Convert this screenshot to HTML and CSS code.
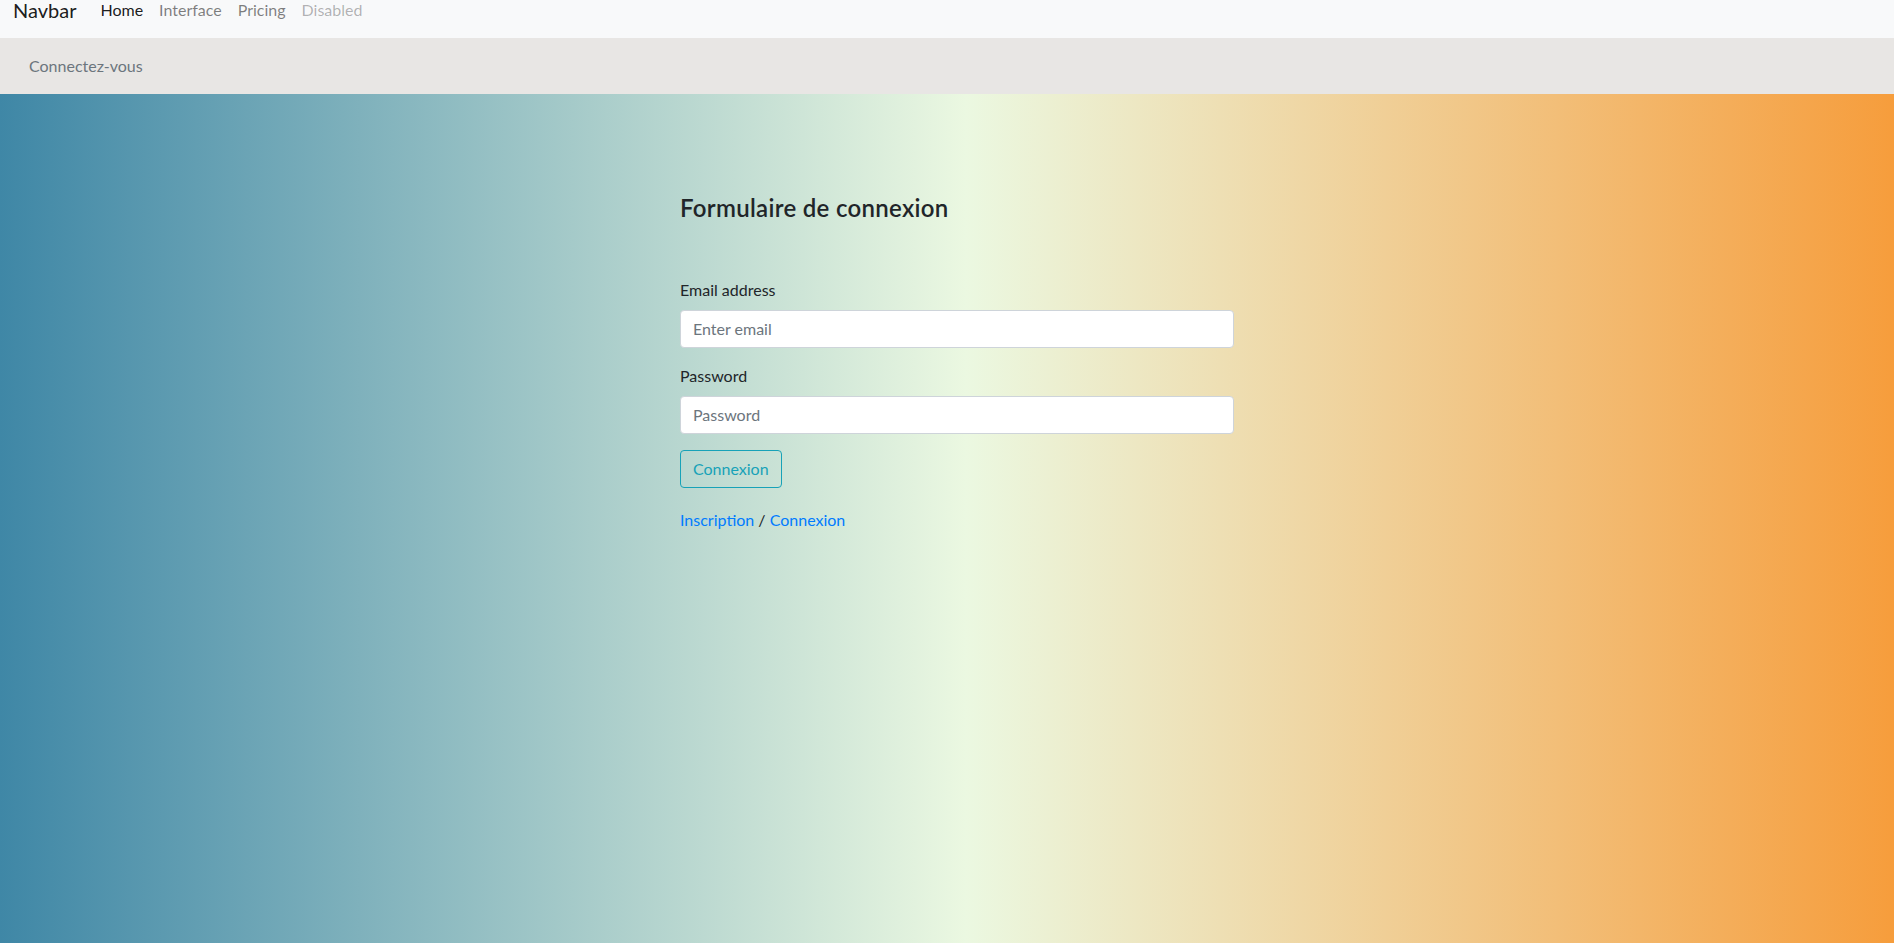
FILE: index.html
```html
<!DOCTYPE html>
<html lang="fr">
<head>
<meta charset="utf-8">
<title>Connexion</title>
<link rel="stylesheet" href="styles.css">
</head>
<body>
<nav class="navbar">
  <a class="brand" href="#">Navbar</a>
  <ul class="nav">
    <li><a class="nav-link active" href="#">Home</a></li>
    <li><a class="nav-link" href="#">Interface</a></li>
    <li><a class="nav-link" href="#">Pricing</a></li>
    <li><a class="nav-link disabled" href="#">Disabled</a></li>
  </ul>
</nav>
<div class="crumb"><span class="crumb-item">Connectez-vous</span></div>
<main class="hero">
  <div class="form-wrap">
    <h4 class="title">Formulaire de connexion</h4>
    <form class="login">
      <div class="form-group">
        <label class="label" for="email">Email address</label>
        <input class="input" id="email" type="email" placeholder="Enter email">
      </div>
      <div class="form-group">
        <label class="label" for="pwd">Password</label>
        <input class="input" id="pwd" type="password" placeholder="Password">
      </div>
      <button class="btn" type="button">Connexion</button>
    </form>
    <p class="links"><a href="#">Inscription</a> / <a href="#">Connexion</a></p>
  </div>
</main>
</body>
</html>
```
FILE: styles.css
```css
* { box-sizing: border-box; }
html, body { margin: 0; padding: 0; }
body {
  font-family: "Segoe UI", Lato, "Noto Sans", sans-serif;
  font-size: 16px;
  line-height: 24px;
  color: #212529;
  background: #fff;
}
a { text-decoration: none; }

.navbar {
  height: 38px;
  padding: 0 12px 0 13px;
  display: flex;
  align-items: flex-start;
  background: #f8f9fa;
}
.brand {
  font-size: 20px;
  line-height: 20px;
  margin-right: 16px;
  color: rgba(0, 0, 0, 0.9);
}
.nav {
  display: flex;
  list-style: none;
  margin: 0;
  padding: 0;
}
.nav-link {
  display: block;
  padding: 0 8px;
  line-height: 20px;
  color: rgba(0, 0, 0, 0.5);
}
.nav-link.active { color: rgba(0, 0, 0, 0.9); }
.nav-link.disabled { color: rgba(0, 0, 0, 0.3); }

.crumb {
  height: 56px;
  padding: 16px 29px;
  background: #e8e6e4;
}
.crumb-item { color: #6c757d; }

.hero {
  min-height: calc(100vh - 94px);
  padding-top: 100px;
  background: linear-gradient(to right, #3f87a6, #ebf8e1 51%, #f69d3c);
}
.form-wrap {
  margin-left: calc(50% - 267px);
  width: 554px;
}
.title {
  margin: 0 0 55px;
  font-size: 24px;
  line-height: 28.8px;
  font-weight: 600;
  letter-spacing: 0.3px;
  color: #212529;
}
.login { margin: 0; }
.form-group { margin-bottom: 16px; }
.label {
  display: block;
  margin-bottom: 8px;
}
.input {
  display: block;
  width: 100%;
  height: 38px;
  padding: 6px 12px;
  font-family: inherit;
  font-size: 16px;
  line-height: 24px;
  color: #495057;
  background: #fff;
  border: 1px solid #ced4da;
  border-radius: 4px;
}
.input::placeholder { color: #6c757d; opacity: 1; }
.btn {
  display: block;
  height: 38px;
  padding: 6px 12px;
  font-family: inherit;
  font-size: 16px;
  line-height: 24px;
  color: #17a2b8;
  background: transparent;
  border: 1px solid #17a2b8;
  border-radius: 4px;
}
.links {
  margin: 20px 0 0;
}
.links a { color: #007bff; }
```
